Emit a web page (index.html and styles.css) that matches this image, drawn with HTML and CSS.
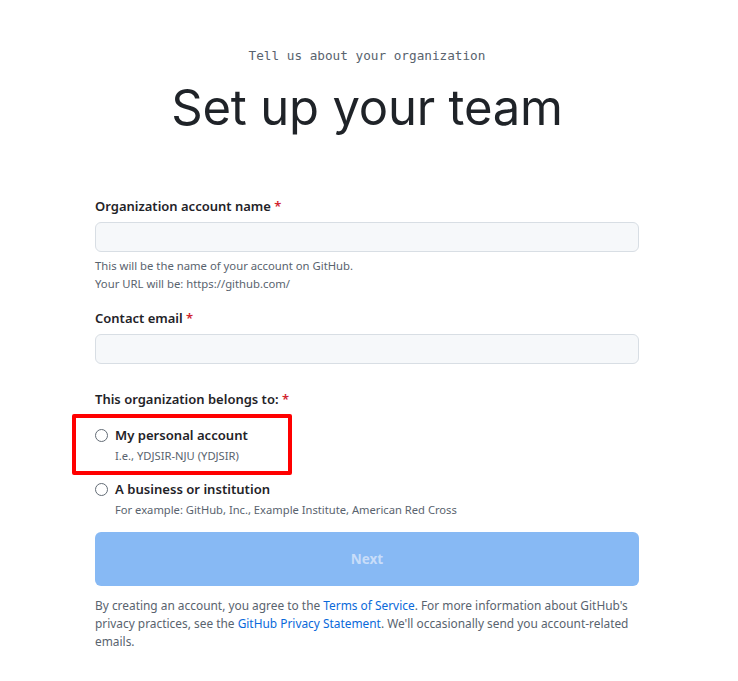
FILE: index.html
```html
<!DOCTYPE html>
<html lang="en">
<head>
<meta charset="utf-8">
<title>Set up your team</title>
<link rel="stylesheet" href="styles.css">
</head>
<body>
<main class="page">
  <header class="head">
    <p class="eyebrow">Tell us about your organization</p>
    <h1 class="title">Set up your team</h1>
  </header>
  <form class="form">
    <div class="field field-name">
      <label class="label">Organization account name <span class="req">*</span></label>
      <input class="input" type="text">
      <p class="note">This will be the name of your account on GitHub.<br>Your URL will be: https://github.com/</p>
    </div>
    <div class="field field-email">
      <label class="label">Contact email <span class="req">*</span></label>
      <input class="input" type="email">
    </div>
    <div class="field group">
      <p class="label">This organization belongs to: <span class="req">*</span></p>
      <div class="option">
        <span class="radio"></span>
        <div class="opt-text">
          <span class="opt-title">My personal account</span>
          <span class="opt-sub">I.e., YDJSIR-NJU (YDJSIR)</span>
        </div>
        <span class="mark"></span>
      </div>
      <div class="option">
        <span class="radio"></span>
        <div class="opt-text">
          <span class="opt-title">A business or institution</span>
          <span class="opt-sub">For example: GitHub, Inc., Example Institute, American Red Cross</span>
        </div>
      </div>
    </div>
    <button class="next" type="button">Next</button>
    <p class="legal">By creating an account, you agree to the <a href="#">Terms of Service</a>. For more information about GitHub's privacy practices, see the <a href="#">GitHub Privacy Statement</a>. We'll occasionally send you account-related emails.</p>
  </form>
</main>
</body>
</html>
```
FILE: styles.css
```css
html, body {
  margin: 0;
  background: #ffffff;
}
body {
  padding-right: 4px;
  font-family: "Noto Sans", "Open Sans", sans-serif;
  color: #1f2328;
}
.page {
  width: 544px;
  margin: 0 auto;
  padding-top: 47px;
}
.head {
  text-align: center;
}
.eyebrow {
  margin: 0;
  font-family: "DejaVu Sans Mono", "Liberation Mono", monospace;
  font-size: 12.7px;
  line-height: 18px;
  color: #59636e;
}
.title {
  margin: 13px 0 0;
  font-family: Inter, "Noto Sans", sans-serif;
  font-weight: 400;
  font-size: 49px;
  line-height: 60px;
  color: #1f2328;
  letter-spacing: -0.2px;
}
.form {
  margin-top: 58px;
}
.field-name {
  margin-bottom: 15px;
}
.field-email {
  margin-bottom: 25px;
}
.label {
  display: block;
  margin: 0 0 5px;
  font-size: 13px;
  line-height: 21px;
  font-weight: 600;
  color: #1f2328;
}
.req {
  color: #d1242f;
}
.input {
  display: block;
  box-sizing: border-box;
  width: 100%;
  height: 30px;
  margin: 0;
  border: 1px solid #d8dee4;
  border-radius: 6px;
  background: #f6f8fa;
}
.note {
  margin: 5px 0 0;
  font-size: 11.3px;
  line-height: 18px;
  color: #59636e;
}
.group {
  margin-bottom: 13px;
}
.group .label {
  margin-bottom: 15px;
}
.option {
  position: relative;
  display: flex;
  gap: 7px;
  margin-bottom: 14px;
}
.option:last-child {
  margin-bottom: 0;
}
.radio {
  flex: none;
  width: 13px;
  height: 13px;
  margin-top: 4px;
  box-sizing: border-box;
  border: 1px solid #636c76;
  border-radius: 50%;
  background: #ffffff;
}
.opt-text {
  display: flex;
  flex-direction: column;
}
.opt-title {
  font-size: 13.1px;
  line-height: 21px;
  font-weight: 600;
}
.opt-sub {
  margin-top: 1px;
  font-size: 11.2px;
  line-height: 18px;
  color: #59636e;
}
.mark {
  position: absolute;
  left: -23px;
  top: -11px;
  width: 220px;
  height: 61px;
  box-sizing: border-box;
  border: 4px solid #ff0000;
  border-radius: 2px;
}
.next {
  display: block;
  width: 100%;
  height: 54px;
  margin: 0;
  border: 0;
  border-radius: 6px;
  background: #87b9f4;
  color: #c8ddf9;
  font-family: "Noto Sans", "Open Sans", sans-serif;
  font-size: 13.5px;
  font-weight: 700;
}
.legal {
  margin: 10px 0 0;
  font-size: 11.9px;
  line-height: 18px;
  color: #59636e;
}
.legal a {
  color: #0969da;
  text-decoration: none;
}
```
